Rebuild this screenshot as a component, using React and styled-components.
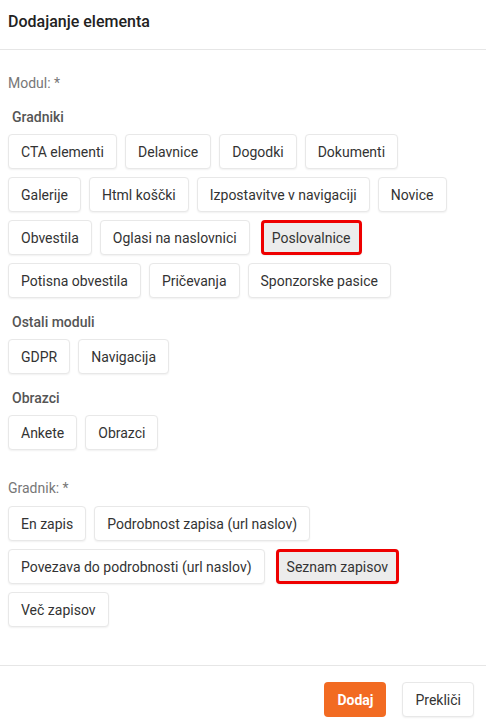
import React from 'react'
import styled, { createGlobalStyle } from 'styled-components'

const GlobalStyle = createGlobalStyle`
  html, body {
    margin: 0;
    padding: 0;
    background: #fff;
  }
  body {
    font-family: Roboto, "Liberation Sans", Arial, sans-serif;
    color: #333;
  }
`

const groups = [
  {
    title: 'Gradniki',
    items: [
      'CTA elementi', 'Delavnice', 'Dogodki', 'Dokumenti', 'Galerije', 'Html koščki',
      'Izpostavitve v navigaciji', 'Novice', 'Obvestila', 'Oglasi na naslovnici',
      'Poslovalnice', 'Potisna obvestila', 'Pričevanja', 'Sponzorske pasice',
    ],
  },
  { title: 'Ostali moduli', items: ['GDPR', 'Navigacija'] },
  { title: 'Obrazci', items: ['Ankete', 'Obrazci'] },
]

const widgets = [
  'En zapis', 'Podrobnost zapisa (url naslov)', 'Povezava do podrobnosti (url naslov)',
  'Seznam zapisov', 'Več zapisov',
]

const App = () => {
  return (
    <>
      <GlobalStyle />
      <Modal>
        <Header>
          <Title>Dodajanje elementa</Title>
        </Header>
        <Body>
          <FieldLabel>Modul: *</FieldLabel>
          {groups.map(g => (
            <Group key={g.title}>
              <GroupTitle>{g.title}</GroupTitle>
              <Chips>
                {g.items.map(item => (
                  <Chip key={item} $selected={item === 'Poslovalnice'}>{item}</Chip>
                ))}
              </Chips>
            </Group>
          ))}
          <FieldLabel $spaced>Gradnik: *</FieldLabel>
          <Chips>
            {widgets.map(item => (
              <Chip key={item} $selected={item === 'Seznam zapisov'}>{item}</Chip>
            ))}
          </Chips>
        </Body>
        <Footer>
          <PrimaryButton>Dodaj</PrimaryButton>
          <SecondaryButton>Prekliči</SecondaryButton>
        </Footer>
      </Modal>
    </>
  )
}

export default App

const Modal = styled.div`
display: flex;
flex-direction: column;
width: 486px;
height: 725px;
background: #fff;
`

const Header = styled.div`
height: 50px;
box-sizing: border-box;
display: flex;
align-items: center;
padding: 0 8px 7px;
border-bottom: 1px solid #e6e6e6;
`

const Title = styled.h2`
margin: 0;
font-size: 16px;
font-weight: 500;
color: #222;
`

const Body = styled.div`
flex: 1;
padding: 25px 12px 0 8px;
display: flex;
flex-direction: column;
`

const FieldLabel = styled.div`
font-size: 14px;
line-height: 16px;
color: #777;
margin-top: ${p => (p.$spaced ? '30px' : '0')};
margin-bottom: ${p => (p.$spaced ? '10px' : '0')};
`

const Group = styled.div`
display: flex;
flex-direction: column;
margin-top: 18px;
& + & {
  margin-top: 16px;
}
`

const GroupTitle = styled.div`
font-size: 14px;
line-height: 16px;
font-weight: 500;
color: #555;
padding-left: 4px;
margin-bottom: 9px;
`

const Chips = styled.div`
display: flex;
flex-wrap: wrap;
gap: 8px;
`

const Chip = styled.button`
height: 35px;
box-sizing: border-box;
padding: ${p => (p.$selected ? '0 8px' : '0 12px')};
margin-left: ${p => (p.$selected ? '3px' : '0')};
font-family: inherit;
font-size: 14px;
color: #333;
background: ${p => (p.$selected ? '#ececec' : '#fff')};
border: ${p => (p.$selected ? '3px solid #ee0000' : '1px solid #e8e8e8')};
border-radius: 4px;
box-shadow: 0 1px 2px rgba(0, 0, 0, 0.06);
white-space: nowrap;
cursor: pointer;
`

const Footer = styled.div`
display: flex;
justify-content: flex-end;
gap: 16px;
padding: 16px 12px 8px;
border-top: 1px solid #e6e6e6;
`

const PrimaryButton = styled.button`
height: 35px;
padding: 0 13px;
font-family: inherit;
font-size: 14px;
font-weight: 700;
color: #fff;
background: #f26b22;
border: none;
border-radius: 4px;
cursor: pointer;
`

const SecondaryButton = styled.button`
height: 35px;
padding: 0 12px;
font-family: inherit;
font-size: 14px;
color: #333;
background: #fff;
border: 1px solid #e8e8e8;
border-radius: 4px;
box-shadow: 0 1px 2px rgba(0, 0, 0, 0.06);
cursor: pointer;
`
